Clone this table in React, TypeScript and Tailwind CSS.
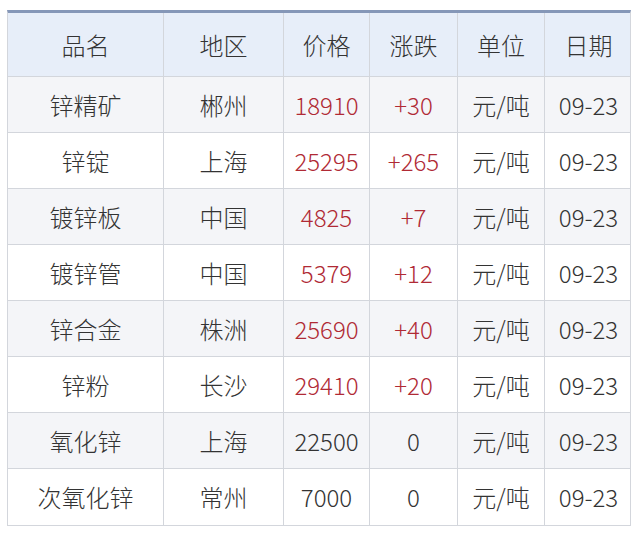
import React from 'react';

interface Row {
  name: string;
  area: string;
  price: string;
  change: string;
  red: boolean;
}

const rows: Row[] = [
  { name: '锌精矿', area: '郴州', price: '18910', change: '+30', red: true },
  { name: '锌锭', area: '上海', price: '25295', change: '+265', red: true },
  { name: '镀锌板', area: '中国', price: '4825', change: '+7', red: true },
  { name: '镀锌管', area: '中国', price: '5379', change: '+12', red: true },
  { name: '锌合金', area: '株洲', price: '25690', change: '+40', red: true },
  { name: '锌粉', area: '长沙', price: '29410', change: '+20', red: true },
  { name: '氧化锌', area: '上海', price: '22500', change: '0', red: false },
  { name: '次氧化锌', area: '常州', price: '7000', change: '0', red: false },
];

const cols = 'grid grid-cols-[156px_120px_86px_88px_87px_87px]';
const cell = 'flex items-center justify-center border-r border-[#d3d6dc] last:border-r-0';

export default function App() {
  return (
    <div className="w-[640px] h-[541px] bg-white pt-[10px] pl-[7px] font-['Noto_Sans_CJK_SC','Noto_Sans',sans-serif] font-light text-[24px] text-[#333]">
      <div className="w-[624px] border-t-[3px] border-t-[#8597b8] border-x border-b border-[#d3d6dc]">
        <div className={`${cols} h-[64px] bg-[#e7eef9] border-b border-[#d3d6dc]`}>
          {['品名', '地区', '价格', '涨跌', '单位', '日期'].map(h => (
            <div key={h} className={cell}>{h}</div>
          ))}
        </div>
        {rows.map((r, i) => (
          <div
            key={r.name}
            className={`${cols} h-[56px] ${i % 2 === 0 ? 'bg-[#f4f5f8]' : 'bg-white'} ${i < rows.length - 1 ? 'border-b border-[#d3d6dc]' : ''}`}
          >
            <div className={cell}>{r.name}</div>
            <div className={cell}>{r.area}</div>
            <div className={`${cell} ${r.red ? 'text-[#b02a35]' : ''}`}>{r.price}</div>
            <div className={`${cell} ${r.red ? 'text-[#b02a35]' : ''}`}>{r.change}</div>
            <div className={cell}>元/吨</div>
            <div className={cell}>09-23</div>
          </div>
        ))}
      </div>
    </div>
  );
}
